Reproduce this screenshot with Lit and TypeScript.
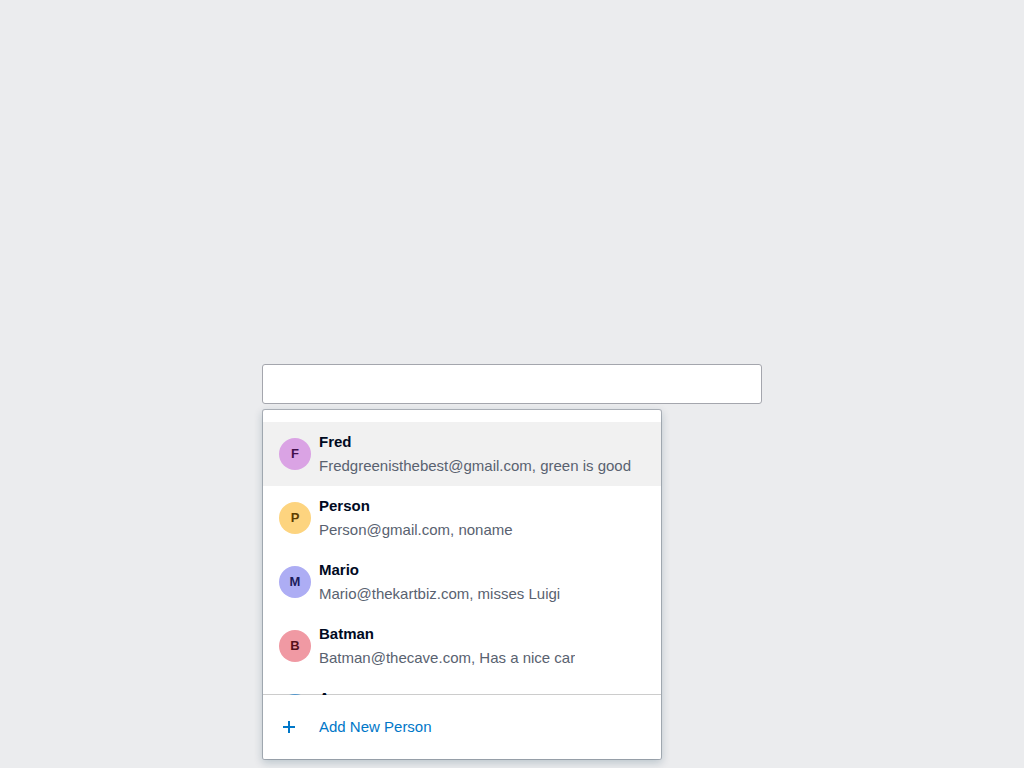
import { LitElement, html, css } from "lit";
import { customElement, state } from "lit/decorators.js";
import { classMap } from "lit/directives/class-map.js";

interface Person {
  name: string;
  detail: string;
  tone: string;
}

const PEOPLE: Person[] = [
  { name: "Fred", detail: "Fredgreenisthebest@gmail.com, green is good", tone: "orchid" },
  { name: "Person", detail: "Person@gmail.com, noname", tone: "amber" },
  { name: "Mario", detail: "Mario@thekartbiz.com, misses Luigi", tone: "violet" },
  { name: "Batman", detail: "Batman@thecave.com, Has a nice car", tone: "rose" },
  { name: "A", detail: "", tone: "sky" },
];

@customElement("person-avatar")
export class PersonAvatar extends LitElement {
  static properties = { name: {}, tone: {} };
  declare name: string;
  declare tone: string;

  static styles = css`
    :host {
      display: block;
      flex: none;
    }
    .avatar {
      display: flex;
      align-items: center;
      justify-content: center;
      width: 32px;
      height: 32px;
      border-radius: 50%;
      font-size: 13px;
      font-weight: 700;
      line-height: 16px;
    }
    .orchid { background: #daa3e4; color: #42104c; }
    .amber { background: #fdd47f; color: #5c3d00; }
    .violet { background: #adadf4; color: #1d1d5c; }
    .rose { background: #f099a3; color: #57111a; }
    .sky { background: #66bdff; color: #003a5c; }
  `;

  render() {
    return html`<div class="avatar ${this.tone}" aria-hidden="true">${this.name.charAt(0)}</div>`;
  }
}

@customElement("app-root")
export class AppRoot extends LitElement {
  @state() private active = 0;

  static styles = css`
    :host {
      display: flex;
      align-items: center;
      justify-content: center;
      min-height: 100vh;
      background: #ebecee;
      font-family: "Liberation Sans", Arial, sans-serif;
      font-size: 15px;
      line-height: 24px;
      color: #000a1f;
    }
    * {
      box-sizing: border-box;
    }
    .picker {
      position: relative;
      width: 100%;
      max-width: 500px;
    }
    .field {
      display: block;
      width: 100%;
      height: 40px;
      padding: 0 12px;
      border: 1px solid #a4a6ad;
      border-radius: 3px;
      background: #fff;
      font: inherit;
      color: inherit;
      outline: none;
    }
    .menu {
      position: absolute;
      top: 100%;
      left: 0;
      width: 80%;
      margin-top: 5px;
      border: 1px solid rgba(0, 11, 33, 0.24);
      border-radius: 3px;
      background: #fff;
      background-clip: padding-box;
      box-shadow: 0 3px 9px rgba(0, 50, 77, 0.2);
      overflow: hidden;
    }
    .options {
      max-height: 285px;
      margin: 0;
      padding: 12px 0 0;
      list-style: none;
      overflow-y: auto;
      scrollbar-width: none;
    }
    .option {
      display: flex;
      align-items: center;
      gap: 8px;
      height: 64px;
      padding: 0 16px;
      cursor: pointer;
    }
    .option.active {
      background: #f1f1f1;
    }
    .text {
      min-width: 0;
    }
    .name,
    .detail {
      min-height: 24px;
      white-space: nowrap;
      overflow: hidden;
      text-overflow: ellipsis;
    }
    .name {
      font-weight: 700;
    }
    .detail {
      color: #596270;
    }
    .add {
      position: relative;
      display: flex;
      align-items: center;
      gap: 20px;
      width: 100%;
      height: 64px;
      padding: 0 16px;
      border: 0;
      background: #fff;
      box-shadow: 0 -1px 0 rgba(0, 0, 0, 0.2);
      font: inherit;
      color: #0077c8;
      cursor: pointer;
    }
    .plus {
      display: block;
      width: 20px;
      height: 20px;
    }
  `;

  render() {
    return html`
      <div class="picker">
        <input
          class="field"
          type="text"
          role="combobox"
          aria-label="Person"
          aria-expanded="true"
          aria-controls="people"
        />
        <div class="menu">
          <ul class="options" id="people" role="listbox" aria-label="People">
            ${PEOPLE.map(
              (person, index) => html`
                <li
                  class=${classMap({ option: true, active: index === this.active })}
                  role="option"
                  aria-selected=${index === this.active ? "true" : "false"}
                  @mouseenter=${() => (this.active = index)}
                >
                  <person-avatar .name=${person.name} .tone=${person.tone}></person-avatar>
                  <div class="text">
                    <div class="name">${person.name}</div>
                    <div class="detail">${person.detail}</div>
                  </div>
                </li>
              `
            )}
          </ul>
          <button class="add" type="button">
            <svg class="plus" viewBox="0 0 20 20" aria-hidden="true">
              <path d="M9 4h2v5h5v2h-5v5H9v-5H4V9h5z" fill="currentColor" />
            </svg>
            <span>Add New Person</span>
          </button>
        </div>
      </div>
    `;
  }
}
